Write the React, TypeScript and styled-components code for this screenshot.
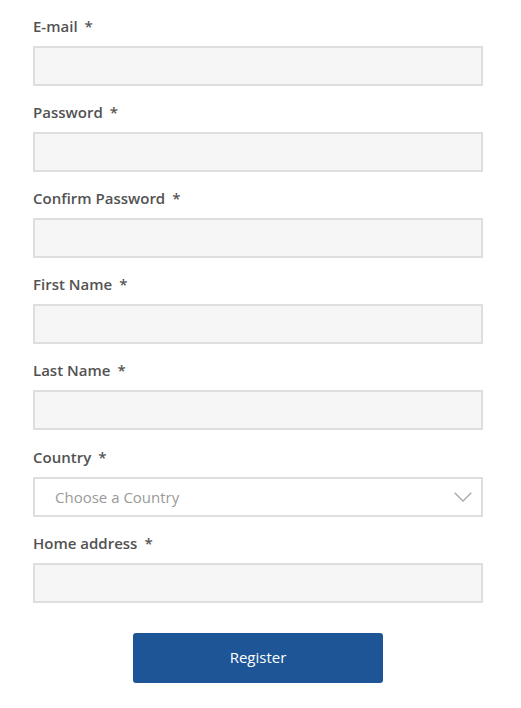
import React from "react";
import styled, { createGlobalStyle } from "styled-components";

const GlobalStyle = createGlobalStyle`
  html, body {
    margin: 0;
    padding: 0;
    background: #ffffff;
  }
  body {
    font-family: "Open Sans", "Liberation Sans", Arial, sans-serif;
  }
  * {
    box-sizing: border-box;
  }
`;

const Form = styled.form`
  width: 521px;
  padding: 16px 38px 25px 33px;
  display: flex;
  flex-direction: column;
`;

const Field = styled.div<{ $shift?: number }>`
  display: flex;
  flex-direction: column;
  margin-top: ${(p) => p.$shift || 0}px;
  margin-bottom: 16px;
`;

const Label = styled.label`
  display: block;
  height: 20px;
  line-height: 20px;
  margin-bottom: 10px;
  font-size: 15px;
  font-weight: 600;
  color: #525252;
`;

const Star = styled.span`
  margin-left: 7px;
  font-weight: 600;
  color: #555;
`;

const Input = styled.input`
  width: 450px;
  height: 40px;
  border: 2px solid #dedede;
  background: #f6f6f6;
  padding: 0 20px;
  font-family: inherit;
  font-size: 15px;
  color: #555;
  outline: none;
`;

const SelectBox = styled.div`
  position: relative;
  width: 450px;
  height: 40px;
  border: 2px solid #dedede;
  background: #ffffff;
  display: flex;
  align-items: center;
  padding: 0 20px;
`;

const Placeholder = styled.span`
  font-size: 15px;
  color: #9a9a9a;
  flex: 1;
`;

const Chevron = styled.svg`
  width: 18px;
  height: 10px;
  margin-right: -11px;
`;

const ButtonRow = styled.div`
  display: flex;
  justify-content: center;
  padding-top: 14px;
`;

const Button = styled.button`
  width: 250px;
  height: 50px;
  padding: 0 0 2px;
  background: #1d5596;
  border: none;
  border-radius: 3px;
  color: #ffffff;
  font-family: inherit;
  font-size: 15px;
  cursor: pointer;
`;

const fields = ["E-mail", "Password", "Confirm Password", "First Name", "Last Name"];

export default function App() {
  return (
    <>
      <GlobalStyle />
      <Form onSubmit={(e) => e.preventDefault()}>
        {fields.map((f) => (
          <Field key={f}>
            <Label>
              {f}
              <Star>*</Star>
            </Label>
            <Input type={f.includes("Password") ? "password" : "text"} />
          </Field>
        ))}
        <Field $shift={1}>
          <Label>
            Country
            <Star>*</Star>
          </Label>
          <SelectBox>
            <Placeholder>Choose a Country</Placeholder>
            <Chevron viewBox="0 0 18 10">
              <path d="M0.7 0.7 L9 9 L17.3 0.7" fill="none" stroke="#a8a8a8" strokeWidth="1.3" />
            </Chevron>
          </SelectBox>
        </Field>
        <Field>
          <Label>
            Home address
            <Star>*</Star>
          </Label>
          <Input type="text" />
        </Field>
        <ButtonRow>
          <Button type="submit">Register</Button>
        </ButtonRow>
      </Form>
    </>
  );
}
